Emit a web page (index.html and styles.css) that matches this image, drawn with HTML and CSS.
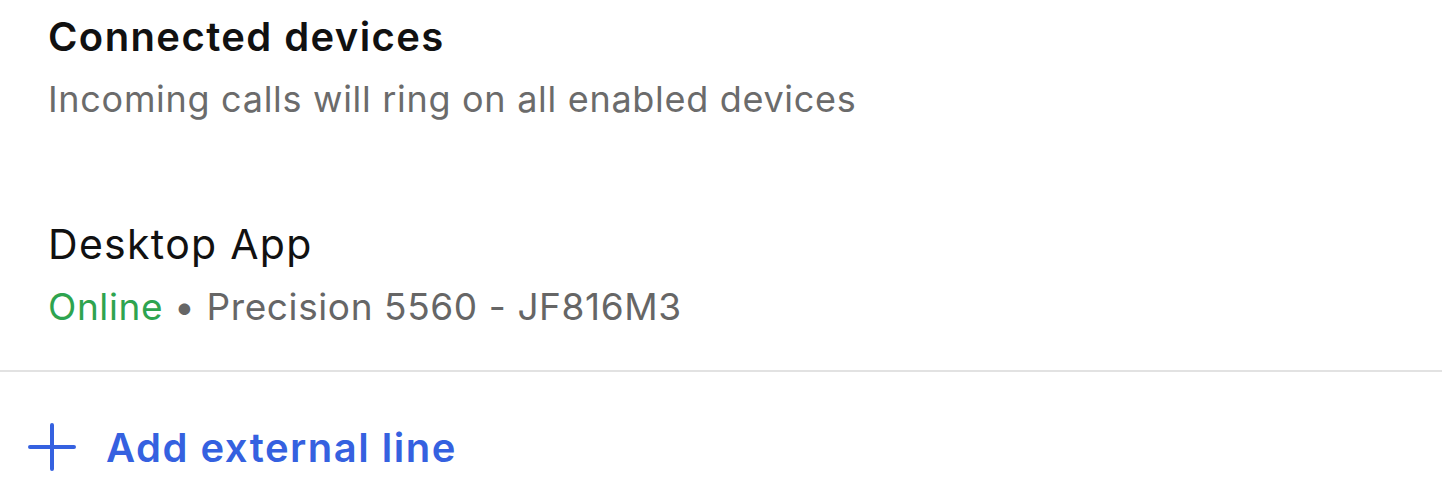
FILE: index.html
```html
<!DOCTYPE html>
<html lang="en">
<head>
    <meta charset="UTF-8">
    <title>Connected devices</title>
    <link rel="stylesheet" href="styles.css">
</head>
<body>
    <div class="devices">
        <div class="section-head">
            <div class="title">Connected devices</div>
            <div class="subtitle">Incoming calls will ring on all enabled devices</div>
        </div>
        <div class="device">
            <div class="device-name">Desktop App</div>
            <div class="device-status"><span class="online">Online</span> &bull; Precision 5560 - JF816M3</div>
        </div>
    </div>
    <div class="divider"></div>
    <div class="add-line">
        <svg class="plus" width="48" height="48" viewBox="0 0 48 48">
            <path d="M24 2 V46 M2 24 H46" stroke="#3561e0" stroke-width="4" stroke-linecap="round" fill="none"/>
        </svg>
        <span class="add-text">Add external line</span>
    </div>
</body>
</html>
```
FILE: styles.css
```css
body {
    margin: 0;
    font-family: Inter, "Noto Sans", sans-serif;
    background: #fff;
}
.devices {
    padding: 12px 48px 0;
}
.title {
    font-size: 40px;
    font-weight: 600;
    letter-spacing: 1.4px;
    line-height: 50px;
    color: #111;
}
.subtitle {
    font-size: 36px;
    letter-spacing: 0.7px;
    line-height: 50px;
    color: #6b6b6b;
    margin-top: 12px;
}
.device {
    margin-top: 95px;
}
.device-name {
    font-size: 41px;
    letter-spacing: 1.3px;
    line-height: 50px;
    color: #111;
}
.device-status {
    font-size: 37px;
    letter-spacing: 0.6px;
    line-height: 50px;
    color: #666;
    margin-top: 13px;
}
.online {
    color: #2ea44f;
}
.divider {
    height: 2px;
    background: #e2e2e2;
    margin-top: 38px;
}
.add-line {
    display: flex;
    align-items: center;
    gap: 30px;
    padding-left: 28px;
    margin-top: 50px;
    height: 50px;
}
.add-text {
    font-size: 40px;
    font-weight: 600;
    letter-spacing: 1.5px;
    color: #3561e0;
}
```
